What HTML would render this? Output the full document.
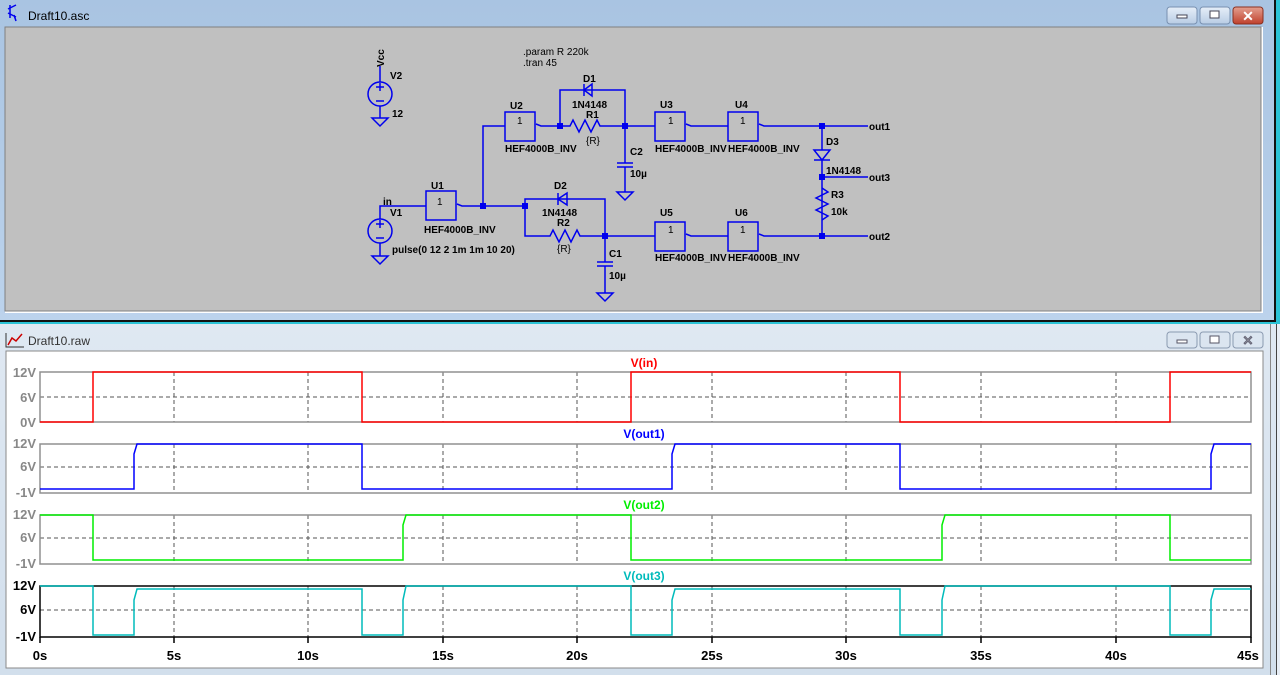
<!DOCTYPE html>
<html><head><meta charset="utf-8"><style>
html,body{margin:0;padding:0;width:1280px;height:675px;overflow:hidden;background:#cfdff0;font-family:"Liberation Sans",sans-serif}
</style></head><body>
<svg width="1280" height="675" xmlns="http://www.w3.org/2000/svg" font-family="Liberation Sans, sans-serif">
<defs>
<linearGradient id="tb" x1="0" y1="0" x2="0" y2="1"><stop offset="0" stop-color="#a9c4e2"/><stop offset="1" stop-color="#bcd3ec"/></linearGradient>
<linearGradient id="tb2" x1="0" y1="0" x2="0" y2="1"><stop offset="0" stop-color="#dfe8f2"/><stop offset="1" stop-color="#d2dfec"/></linearGradient>
<linearGradient id="btn" x1="0" y1="0" x2="0" y2="1"><stop offset="0" stop-color="#e6eef8"/><stop offset="1" stop-color="#b8cce4"/></linearGradient>
<linearGradient id="cls" x1="0" y1="0" x2="0" y2="1"><stop offset="0" stop-color="#e3a090"/><stop offset="1" stop-color="#c0402c"/></linearGradient>
</defs>
<!-- top window -->
<rect x="0" y="0" width="1280" height="323" fill="url(#tb)"/>
<rect x="1274" y="0" width="2" height="323" fill="#111"/>
<rect x="1276" y="0" width="4" height="323" fill="#2bc3d6"/>
<rect x="0" y="320" width="1276" height="2" fill="#111"/>
<rect x="0" y="322" width="1280" height="2" fill="#2bc3d6"/>
<rect x="5" y="27" width="1258" height="286" fill="#fff"/>
<rect x="5" y="27" width="1256" height="284" fill="#c0c0c0" stroke="#808080" stroke-width="1"/>
<g fill="none" stroke="#0000ee" stroke-width="1.5"><path d="M10 5 L10 18 M8 9 L16 5 M8 13 L16 17 M14 15 L16 21"/></g>
<text x="28" y="20" font-size="12" fill="#000">Draft10.asc</text>
<rect x="1167" y="7" width="30" height="17" rx="3" fill="url(#btn)" stroke="#7890b0"/>
<rect x="1177" y="15" width="10" height="3" fill="#fff" stroke="#445"/>
<rect x="1200" y="7" width="30" height="17" rx="3" fill="url(#btn)" stroke="#7890b0"/>
<rect x="1210" y="11" width="9" height="7" fill="#fff" stroke="#445"/>
<rect x="1233" y="7" width="30" height="17" rx="3" fill="url(#cls)" stroke="#8a3020"/>
<text x="1248" y="21" font-size="14" font-weight="bold" fill="#fff" text-anchor="middle">✕</text>

<!-- schematic -->
<g stroke="#0000ee" stroke-width="1.5" fill="none">
<path d="M380 66 L380 82 M380 106 L380 118 M372 118 L388 118 L380 126 Z"/>
<circle cx="380" cy="94" r="12"/>
<path d="M376 87 L384 87 M380 83 L380 91 M376 101 L384 101"/>
<path d="M380 219 L380 206 L426 206 M380 243 L380 256 M372 256 L388 256 L380 264 Z"/>
<circle cx="380" cy="231" r="12"/>
<path d="M376 224 L384 224 M380 220 L380 228 M376 238 L384 238"/>
<rect x="426" y="191" width="30" height="29"/>
<path d="M457 204 L462 206 L470 206 L525 206"/>
<path d="M483 206 L483 126 L505 126"/>
<rect x="505" y="112" width="30" height="29"/>
<path d="M536 124 L541 126 L560 126 L570 126 L573 120 L579 132 L585 120 L591 132 L597 120 L600 126 L625 126 L655 126"/>
<path d="M560 126 L560 90 L625 90 L625 126"/>
<path d="M592 84 L592 96 L584 90 Z M584 84 L584 96"/>
<path d="M625 126 L625 163 M617 163 L633 163 M617 167 L633 167 M625 167 L625 192 M617 192 L633 192 L625 200 Z"/>
<rect x="655" y="112" width="30" height="29"/>
<path d="M686 124 L691 126 L728 126"/>
<rect x="728" y="112" width="30" height="29"/>
<path d="M759 124 L764 126 L868 126"/>
<path d="M822 126 L822 150 M814 150 L830 150 L822 160 Z M814 160 L830 160 M822 160 L822 236 M822 177 L868 177"/>
<path d="M822 188 L828 192 L816 198 L828 204 L816 210 L828 216 L822 220" />
<path d="M525 206 L525 199 L605 199 L605 236 M525 206 L525 236 L550 236 L553 230 L559 242 L565 230 L571 242 L577 230 L580 236 L655 236"/>
<path d="M567 193 L567 205 L558 199 Z M558 193 L558 205"/>
<path d="M605 236 L605 262 M597 262 L613 262 M597 266 L613 266 M605 266 L605 293 M597 293 L613 293 L605 301 Z"/>
<rect x="655" y="222" width="30" height="29"/>
<path d="M686 234 L691 236 L728 236"/>
<rect x="728" y="222" width="30" height="29"/>
<path d="M759 234 L764 236 L868 236"/>
</g>
<g fill="#0000ee">
<rect x="480" y="203" width="6" height="6"/><rect x="522" y="203" width="6" height="6"/>
<rect x="557" y="123" width="6" height="6"/><rect x="622" y="123" width="6" height="6"/>
<rect x="602" y="233" width="6" height="6"/><rect x="819" y="123" width="6" height="6"/>
<rect x="819" y="174" width="6" height="6"/><rect x="819" y="233" width="6" height="6"/>
</g>
<g font-size="10" font-weight="bold" fill="#000">
<text transform="translate(384,67) rotate(-90)">Vcc</text>
<text x="390" y="79">V2</text><text x="392" y="117">12</text>
<text x="383" y="205">in</text><text x="390" y="216">V1</text>
<text x="392" y="253">pulse(0 12 2 1m 1m 10 20)</text>
<text x="523" y="55" font-weight="normal">.param R 220k</text>
<text x="523" y="66" font-weight="normal">.tran 45</text>
<text x="431" y="189">U1</text><text x="437" y="205" font-weight="normal">1</text><text x="424" y="233">HEF4000B_INV</text>
<text x="510" y="109">U2</text><text x="517" y="124" font-weight="normal">1</text><text x="505" y="152">HEF4000B_INV</text>
<text x="583" y="82">D1</text><text x="572" y="108">1N4148</text><text x="586" y="118">R1</text><text x="586" y="144" font-weight="normal">{R}</text>
<text x="630" y="155">C2</text><text x="630" y="177">10µ</text>
<text x="660" y="108">U3</text><text x="668" y="124" font-weight="normal">1</text><text x="655" y="152">HEF4000B_INV</text>
<text x="735" y="108">U4</text><text x="740" y="124" font-weight="normal">1</text><text x="728" y="152">HEF4000B_INV</text>
<text x="826" y="145">D3</text><text x="826" y="174">1N4148</text><text x="831" y="198">R3</text><text x="831" y="215">10k</text>
<text x="869" y="130">out1</text><text x="869" y="181">out3</text><text x="869" y="240">out2</text>
<text x="554" y="189">D2</text><text x="542" y="216">1N4148</text><text x="557" y="226">R2</text><text x="557" y="252" font-weight="normal">{R}</text>
<text x="609" y="257">C1</text><text x="609" y="279">10µ</text>
<text x="660" y="216">U5</text><text x="668" y="233" font-weight="normal">1</text><text x="655" y="261">HEF4000B_INV</text>
<text x="735" y="216">U6</text><text x="740" y="233" font-weight="normal">1</text><text x="728" y="261">HEF4000B_INV</text>
</g>

<!-- bottom window -->
<rect x="0" y="324" width="1280" height="351" fill="url(#tb2)"/>
<rect x="1270" y="324" width="1" height="351" fill="#888"/>
<rect x="1276" y="324" width="1" height="351" fill="#444"/>
<rect x="1277" y="324" width="3" height="351" fill="#e8eef5"/>
<g stroke="#c00" stroke-width="1.5" fill="none"><path d="M8 345 L12 338 L16 341 L22 334"/></g>
<path d="M6 333 L6 347 L24 347" stroke="#333" fill="none"/>
<text x="28" y="345" font-size="12" fill="#333">Draft10.raw</text>
<rect x="1167" y="332" width="30" height="16" rx="3" fill="#dbe5f0" stroke="#8a9ab0"/>
<rect x="1177" y="340" width="10" height="3" fill="#fff" stroke="#556"/>
<rect x="1200" y="332" width="30" height="16" rx="3" fill="#dbe5f0" stroke="#8a9ab0"/>
<rect x="1210" y="336" width="9" height="7" fill="#fff" stroke="#556"/>
<rect x="1233" y="332" width="30" height="16" rx="3" fill="#dbe5f0" stroke="#8a9ab0"/>
<text x="1248" y="345" font-size="13" font-weight="bold" fill="#fff" stroke="#667" stroke-width="0.6" text-anchor="middle">✕</text>
<rect x="6" y="351" width="1257" height="317" fill="#fff" stroke="#8a8a8a"/>

<g fill="none">
<g stroke="#555" stroke-dasharray="4,3" stroke-width="1">
<path d="M174 372V422M308 372V422M443 372V422M577 372V422M712 372V422M846 372V422M981 372V422M1116 372V422"/>
<path d="M174 444V493M308 444V493M443 444V493M577 444V493M712 444V493M846 444V493M981 444V493M1116 444V493"/>
<path d="M174 515V564M308 515V564M443 515V564M577 515V564M712 515V564M846 515V564M981 515V564M1116 515V564"/>
<path d="M174 586V637M308 586V637M443 586V637M577 586V637M712 586V637M846 586V637M981 586V637M1116 586V637"/>
<path d="M40 397H1251M40 467H1251M40 538H1251M40 610H1251"/>
</g>
<g stroke="#909090" stroke-width="1.5">
<rect x="40" y="372" width="1211" height="50"/>
<rect x="40" y="444" width="1211" height="49"/>
<rect x="40" y="515" width="1211" height="49"/>
</g>
<g stroke="#000" stroke-width="1.5">
<path d="M40 586H1251V637H40Z"/>
<path d="M40 637V643M174 637V643M308 637V643M443 637V643M577 637V643M712 637V643M846 637V643M981 637V643M1116 637V643M1251 637V643"/>
</g>
<g stroke-width="1.5">
<path stroke="#f00" d="M40 422H93V372H362V422H631V372H900V422H1170V372H1251"/>
<path stroke="#00f" d="M40 489H134V454L137 444H362V489H672V454L675 444H900V489H1211V454L1214 444H1251"/>
<path stroke="#0e0" d="M40 515H93V560H403V525L406 515H631V560H942V525L945 515H1170V560H1251"/>
<path stroke="#0bb" d="M40 586H93V635H134V600L137 589H362V635H403V600L406 586H631V635H672V600L675 589H900V635H942V600L945 586H1170V635H1211V600L1214 589H1251"/>
</g>
</g>
<g font-size="13" font-weight="bold" fill="#888" text-anchor="end">
<text x="36" y="377">12V</text><text x="36" y="402">6V</text><text x="36" y="427">0V</text>
<text x="36" y="448">12V</text><text x="36" y="471">6V</text><text x="36" y="497">-1V</text>
<text x="36" y="519">12V</text><text x="36" y="542">6V</text><text x="36" y="568">-1V</text>
</g>
<g font-size="13" font-weight="bold" fill="#000" text-anchor="end">
<text x="36" y="590">12V</text><text x="36" y="614">6V</text><text x="36" y="641">-1V</text>
</g>
<g font-size="13" font-weight="bold" fill="#000" text-anchor="middle">
<text x="40" y="660">0s</text><text x="174" y="660">5s</text><text x="308" y="660">10s</text><text x="443" y="660">15s</text><text x="577" y="660">20s</text><text x="712" y="660">25s</text><text x="846" y="660">30s</text><text x="981" y="660">35s</text><text x="1116" y="660">40s</text><text x="1248" y="660">45s</text>
</g>
<g font-size="12" font-weight="bold" text-anchor="middle">
<text x="644" y="367" fill="#f00">V(in)</text>
<text x="644" y="438" fill="#00f">V(out1)</text>
<text x="644" y="509" fill="#0e0">V(out2)</text>
<text x="644" y="580" fill="#0bb">V(out3)</text>
</g>
</svg>
</body></html>
